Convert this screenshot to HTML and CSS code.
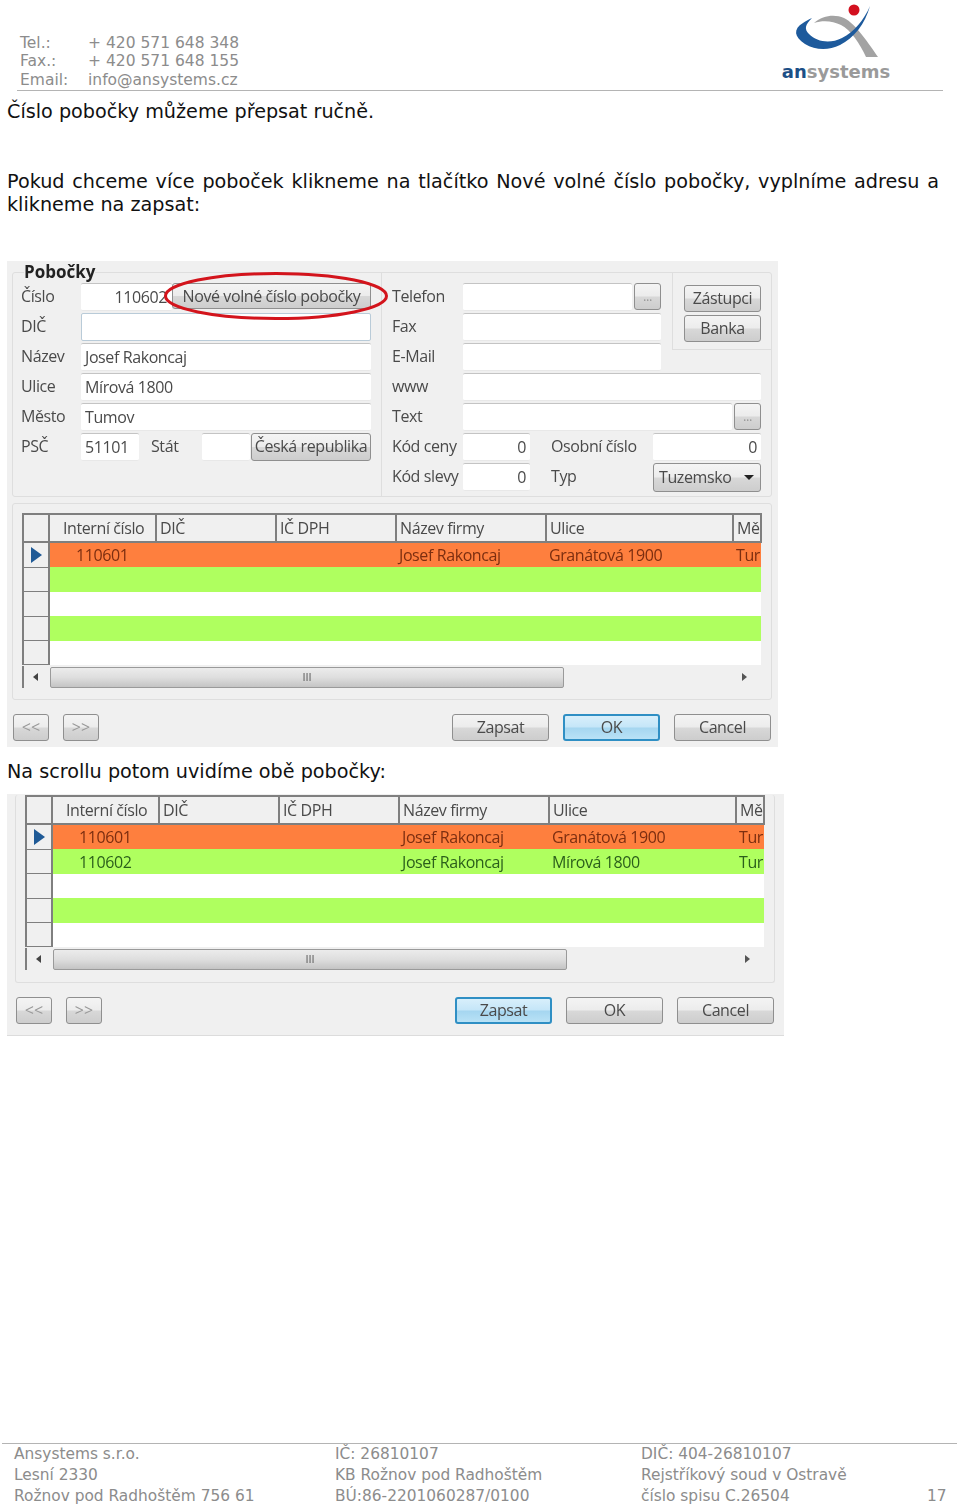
FILE: index.html
```html
<!DOCTYPE html>
<html lang="cs">
<head>
  <meta charset="UTF-8" />
  <meta name="viewport" content="width=device-width, initial-scale=1.0" />
  <title>Pobočky</title>
  <link rel="stylesheet" href="styles.css">
</head>
<body>

  <header class="page-header">
    <div class="contact">
      <span>Tel.:</span><span>+ 420 571 648 348</span>
      <span>Fax.:</span><span>+ 420 571 648 155</span>
      <span>Email:</span><span>info@ansystems.cz</span>
    </div>
    <div class="logo">
      <svg class="logo-mark" width="90" height="63" viewBox="0 0 90 63">
        <path fill="#a3a3a3" d="M23 23 C32 15 44 14 53 18 C65 24 78 44 87 57 L75 57 C69 44 60 30 50 25 C42 21 32 20 23 23 Z" />
        <path fill="#1d5a9c" d="M79 6 C74 24 63 38 49 45 C37 51 24 50 14 44 C3 37 2 29 12 23 C15 21 18 19 21 18 C14 25 13 29 18 34 C26 42 39 44 51 38 C63 32 73 20 79 6 Z" />
        <circle fill="#d3101f" cx="63" cy="10" r="5.5" />
      </svg>
      <div class="logo-text"><b>an</b>systems</div>
    </div>
  </header>

  <main class="content">
    <p class="first">Číslo pobočky můžeme přepsat ručně.</p>
    <p class="justified">Pokud chceme více poboček klikneme na tlačítko Nové volné číslo pobočky, vyplníme adresu a klikneme na zapsat:</p>

    <div class="dialog dialog-full">
      <fieldset class="group">
        <legend>Pobočky</legend>
        <div class="group-cols">

          <div class="col-left">
            <div class="row"><span class="lbl">Číslo</span><div class="field num w-89">110602</div><div class="btn btn-new">Nové volné číslo pobočky</div></div>
            <div class="row"><span class="lbl">DIČ</span><div class="field grow active"></div></div>
            <div class="row"><span class="lbl">Název</span><div class="field grow">Josef Rakoncaj</div></div>
            <div class="row"><span class="lbl">Ulice</span><div class="field grow">Mírová 1800</div></div>
            <div class="row"><span class="lbl">Město</span><div class="field grow">Tumov</div></div>
            <div class="row"><span class="lbl">PSČ</span><div class="field w-58">51101</div><span class="lbl-mid">Stát</span><div class="field w-48"></div><div class="btn btn-country">Česká republika</div></div>
          </div>

          <div class="col-right">
            <div class="right-top">
              <div class="right-fields">
                <div class="row"><span class="lbl lbl-r">Telefon</span><div class="field grow"></div><div class="btn btn-dots">...</div></div>
                <div class="row"><span class="lbl lbl-r">Fax</span><div class="field grow"></div></div>
                <div class="row"><span class="lbl lbl-r">E-Mail</span><div class="field grow"></div></div>
              </div>
              <div class="side-panel">
                <div class="btn">Zástupci</div>
                <div class="btn">Banka</div>
              </div>
            </div>
            <div class="row row-wide"><span class="lbl lbl-r">www</span><div class="field grow"></div></div>
            <div class="row row-wide"><span class="lbl lbl-r">Text</span><div class="field grow"></div><div class="btn btn-dots">...</div></div>
            <div class="row row-wide"><span class="lbl lbl-r">Kód ceny</span><div class="field num w-67">0</div><span class="lbl-far">Osobní číslo</span><div class="field num grow">0</div></div>
            <div class="row row-wide"><span class="lbl lbl-r">Kód slevy</span><div class="field num w-67">0</div><span class="lbl-far">Typ</span><div class="btn btn-select">Tuzemsko<span class="caret"></span></div></div>
          </div>

        </div>
      </fieldset>

      <div class="grid-panel">
        <table class="data-grid">
          <colgroup><col class="c-head"><col class="c-num"><col class="c-dic"><col class="c-dph"><col class="c-name"><col class="c-street"><col class="c-city"></colgroup>
          <tr class="head"><th></th><th class="first-col">Interní číslo</th><th>DIČ</th><th>IČ DPH</th><th>Název firmy</th><th>Ulice</th><th>Mě</th></tr>
          <tr class="orange"><th><span class="pointer"></span></th><td class="id">110601</td><td></td><td></td><td>Josef Rakoncaj</td><td>Granátová 1900</td><td>Tur</td></tr>
          <tr class="green"><th></th><td></td><td></td><td></td><td></td><td></td><td></td></tr>
          <tr><th></th><td></td><td></td><td></td><td></td><td></td><td></td></tr>
          <tr class="green"><th></th><td></td><td></td><td></td><td></td><td></td><td></td></tr>
          <tr><th></th><td></td><td></td><td></td><td></td><td></td><td></td></tr>
        </table>
        <div class="scrollbar">
          <span class="arrow arrow-left"></span>
          <div class="thumb"><span class="grip">III</span></div>
          <span class="arrow arrow-right"></span>
        </div>
      </div>

      <div class="dialog-buttons">
        <div class="btn btn-nav">&lt;&lt;</div>
        <div class="btn btn-nav">&gt;&gt;</div>
        <div class="spacer"></div>
        <div class="btn btn-main">Zapsat</div>
        <div class="btn btn-main focused">OK</div>
        <div class="btn btn-main">Cancel</div>
      </div>

      <svg class="highlight" width="226" height="52" viewBox="0 0 226 52">
        <ellipse cx="113" cy="26" rx="110.5" ry="22.5" fill="none" stroke="#d3141c" stroke-width="3" />
      </svg>
    </div>

    <p class="caption">Na scrollu potom uvidíme obě pobočky:</p>

    <div class="dialog dialog-crop">
      <div class="grid-panel">
        <table class="data-grid">
          <colgroup><col class="c-head"><col class="c-num"><col class="c-dic"><col class="c-dph"><col class="c-name"><col class="c-street"><col class="c-city"></colgroup>
          <tr class="head"><th></th><th class="first-col">Interní číslo</th><th>DIČ</th><th>IČ DPH</th><th>Název firmy</th><th>Ulice</th><th>Mě</th></tr>
          <tr class="orange"><th><span class="pointer"></span></th><td class="id">110601</td><td></td><td></td><td>Josef Rakoncaj</td><td>Granátová 1900</td><td>Tur</td></tr>
          <tr class="green"><th></th><td class="id">110602</td><td></td><td></td><td>Josef Rakoncaj</td><td>Mírová 1800</td><td>Tur</td></tr>
          <tr><th></th><td></td><td></td><td></td><td></td><td></td><td></td></tr>
          <tr class="green"><th></th><td></td><td></td><td></td><td></td><td></td><td></td></tr>
          <tr><th></th><td></td><td></td><td></td><td></td><td></td><td></td></tr>
        </table>
        <div class="scrollbar">
          <span class="arrow arrow-left"></span>
          <div class="thumb"><span class="grip">III</span></div>
          <span class="arrow arrow-right"></span>
        </div>
      </div>

      <div class="dialog-buttons">
        <div class="btn btn-nav">&lt;&lt;</div>
        <div class="btn btn-nav">&gt;&gt;</div>
        <div class="spacer"></div>
        <div class="btn btn-main focused">Zapsat</div>
        <div class="btn btn-main">OK</div>
        <div class="btn btn-main">Cancel</div>
      </div>
    </div>
  </main>

  <footer class="page-footer">
    <div class="foot-col foot-a">Ansystems s.r.o.<br>Lesní 2330<br>Rožnov pod Radhoštěm 756 61</div>
    <div class="foot-col foot-b">IČ: 26810107<br>KB Rožnov pod Radhoštěm<br>BÚ:86-2201060287/0100</div>
    <div class="foot-col foot-c">DIČ: 404-26810107<br>Rejstříkový soud v Ostravě<br>číslo spisu C.26504</div>
    <div class="foot-page">17</div>
  </footer>

</body>
</html>
```

FILE: styles.css
```css
body {
  margin: 0;
  width: 960px;
  height: 1506px;
  display: flex;
  flex-direction: column;
  overflow: hidden;
  background: #fff;
  color: #111;
  font-family: 'DejaVu Sans', sans-serif;
}

/* page header */
.page-header {
  height: 90px;
  margin: 0 17px;
  border-bottom: 1px solid #b4b4b4;
  display: flex;
  justify-content: space-between;
  align-items: flex-end;
}

.contact {
  display: grid;
  grid-template-columns: 68px auto;
  margin: 0 0 1px 3px;
  font-size: 15.5px;
  line-height: 18.5px;
  color: #8c8c8c;
}

.logo {
  width: 110px;
  margin-right: 52px;
  display: flex;
  flex-direction: column;
  align-items: center;
}

.logo-mark {
  display: block;
}

.logo-text {
  margin: 0 0 9px;
  font-family: 'DejaVu Sans', sans-serif;
  font-size: 18px;
  font-weight: bold;
  line-height: 18px;
  color: #9a9a9a;
}

.logo-text b {
  color: #1c4f86;
}

/* text */
.content {
  flex: 1;
  padding-left: 7px;
}

.content p {
  margin: 0;
  font-size: 19.2px;
  line-height: 23px;
}

.content .first {
  margin-top: 9px;
}

.content .justified {
  margin-top: 47px;
  width: 932px;
  text-align: justify;
}

.content .caption {
  margin-top: 13px;
}

/* dialogs */
.dialog {
  position: relative;
  box-sizing: border-box;
  background: #f0f0f0;
  font-family: 'Open Sans', sans-serif;
  font-size: 16px;
  letter-spacing: -0.4px;
  color: #4a4a4a;
  filter: blur(0.4px);
}

.dialog-full {
  width: 771px;
  height: 486px;
  margin-top: 45px;
  padding-left: 5px;
}

.dialog-crop {
  width: 777px;
  height: 242px;
  margin-top: 11px;
  padding: 1px 0 0 8px;
  border-bottom: 1px solid #dcdcdc;
}

.group {
  box-sizing: border-box;
  width: 760px;
  height: 236px;
  margin: 0;
  padding: 0;
  border: 1px solid #dedede;
  border-radius: 3px;
}

.group legend {
  margin-left: 11px;
  padding: 0;
  font-size: 17px;
  font-weight: bold;
  line-height: 22px;
  letter-spacing: 0;
  color: #222;
}

.group-cols {
  display: flex;
  height: 214px;
}

.col-left {
  width: 368px;
  box-sizing: border-box;
  padding: 0 0 0 8px;
}

.col-right {
  width: 390px;
  box-sizing: border-box;
  margin-top: -10px;
  padding-left: 10px;
  border-left: 1px solid #dedede;
}

.right-top {
  display: flex;
  padding-top: 10px;
}

.right-fields {
  width: 269px;
}

.side-panel {
  width: 99px;
  height: 77px;
  box-sizing: border-box;
  margin: -10px 0 0 11px;
  padding: 12px 10px 0 11px;
  border-left: 1px solid #dedede;
  border-bottom: 1px solid #dedede;
  display: flex;
  flex-direction: column;
  gap: 3px;
}

.row {
  height: 30px;
  display: flex;
  align-items: flex-start;
  line-height: 26px;
}

.row-wide {
  width: 369px;
}

.col-left .row {
  width: 350px;
}

.lbl {
  width: 60px;
  flex: none;
}

.lbl-r {
  width: 71px;
}

.lbl-mid {
  width: 63px;
  padding-left: 12px;
  box-sizing: border-box;
  flex: none;
}

.lbl-far {
  width: 123px;
  padding-left: 21px;
  box-sizing: border-box;
  flex: none;
}

.field {
  height: 28px;
  box-sizing: border-box;
  padding: 0 4px;
  background: #fff;
  border-top: 1px solid #c4c4c4;
  border-bottom: 1px solid #e8e8e8;
  border-radius: 2px;
  white-space: nowrap;
}

.field.active {
  border: 1px solid #b9cbd8;
}

.grow {
  flex: 1;
}

.num {
  text-align: right;
}

.w-89 {
  width: 91px;
  flex: none;
  padding-right: 5px;
}

.w-58 { width: 58px; flex: none; }
.w-48 { width: 48px; flex: none; }
.w-67 { width: 67px; flex: none; }

.btn {
  box-sizing: border-box;
  height: 27px;
  border: 1px solid #8f8f8f;
  border-radius: 3px;
  background: linear-gradient(#f4f4f4, #ececec 48%, #d8d8d8 52%, #cdcdcd);
  text-align: center;
  line-height: 24px;
  white-space: nowrap;
  color: #4a4a4a;
}

.btn-new {
  width: 199px;
  flex: none;
  height: 26px;
}

.btn-country {
  width: 120px;
  margin-left: 1px;
  flex: none;
  height: 28px;
}

.btn-dots {
  width: 27px;
  margin-left: 2px;
  flex: none;
  color: #999;
  font-size: 13px;
}

.btn-select {
  flex: 1;
  position: relative;
  text-align: left;
  padding-left: 5px;
  height: 29px;
  line-height: 27px;
}

.caret {
  position: absolute;
  right: 6px;
  top: 11px;
  border-left: 5px solid transparent;
  border-right: 5px solid transparent;
  border-top: 5px solid #222;
}

/* data grid */
.grid-panel {
  box-sizing: border-box;
  width: 760px;
  height: 197px;
  margin-top: 6px;
  padding: 9px 0 0 9px;
  border: 1px solid #dedede;
  border-radius: 3px;
}

.dialog-crop .grid-panel {
  margin-top: 0;
  height: 188px;
  padding-top: 0;
  border-top: none;
}

.data-grid {
  width: 738px;
  table-layout: fixed;
  border-collapse: collapse;
}

.c-head { width: 26px; }
.c-num { width: 107px; }
.c-dic { width: 120px; }
.c-dph { width: 120px; }
.c-name { width: 150px; }
.c-street { width: 187px; }
.c-city { width: 28px; }

.data-grid th,
.data-grid td {
  height: 24.4px;
  padding: 0 0 0 3px;
  overflow: hidden;
  white-space: nowrap;
  font-weight: normal;
  text-align: left;
  line-height: 22px;
}

.data-grid th {
  box-sizing: border-box;
  background: #f0f0f0;
  border: 2px solid #7f7f7f;
}

.data-grid .head th {
  height: 28px;
}

.data-grid .head th.first-col {
  padding-left: 13px;
}

.data-grid tr:not(.head) th {
  border-top-width: 1px;
  border-bottom-width: 1px;
}

.data-grid td {
  background: #fff;
}

.data-grid .orange td {
  background: #fe7f3e;
  color: #7c2e10;
}

.data-grid .green td {
  background: #afff5f;
  color: #2b5f1b;
}

.data-grid td.id {
  padding-left: 26px;
}

.pointer {
  display: block;
  width: 0;
  margin-left: 4px;
  border-top: 8px solid transparent;
  border-bottom: 8px solid transparent;
  border-left: 11px solid #1f5a96;
}

.scrollbar {
  width: 738px;
  height: 22px;
  margin-top: 1px;
  display: flex;
  align-items: center;
  border-left: 2px solid #7f7f7f;
  box-sizing: border-box;
}

.arrow {
  width: 0;
  border-top: 4px solid transparent;
  border-bottom: 4px solid transparent;
}

.arrow-left {
  margin-left: 9px;
  border-right: 5px solid #444;
}

.arrow-right {
  margin-left: 178px;
  border-left: 5px solid #555;
}

.thumb {
  width: 514px;
  height: 21px;
  margin-left: 12px;
  box-sizing: border-box;
  border: 1px solid #9a9a9a;
  border-radius: 2px;
  background: linear-gradient(#ececec, #dedede 50%, #c4c4c4);
  text-align: center;
  line-height: 18px;
  font-size: 11px;
  letter-spacing: 0;
}

.grip {
  color: #555;
}

.dialog-buttons {
  display: flex;
  gap: 14px;
  width: 758px;
  margin: 14px 0 0 1px;
}

.btn-nav {
  width: 36px;
  color: #999;
  letter-spacing: 0;
}

.spacer {
  flex: 1;
}

.btn-main {
  width: 97px;
}

.btn.focused {
  border-color: #2f8fc4;
  border-width: 2px;
  line-height: 22px;
  background: linear-gradient(#d8effb, #c5e6f8 48%, #a5d6f0 52%, #b9e2f6);
}

.highlight {
  position: absolute;
  left: 156px;
  top: 9px;
}

/* page footer */
.page-footer {
  height: 62px;
  margin: 0 3px 0 2px;
  padding-left: 12px;
  border-top: 1px solid #b4b4b4;
  display: flex;
  font-size: 15.4px;
  line-height: 21px;
  color: #8c8c8c;
}

.foot-a { width: 321px; }
.foot-b { width: 306px; }
.foot-c { width: 286px; }

.foot-page {
  margin-top: 42px;
  width: 20px;
}
```
